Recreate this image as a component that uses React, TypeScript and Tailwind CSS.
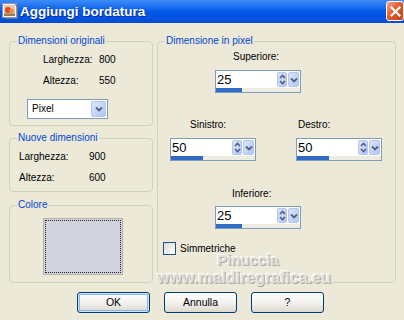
const font = "font-['Liberation_Sans',Arial,sans-serif]";

function SpinArrows() {
  return (
    <div className="w-[10px] h-[15px] rounded-[2px] border border-[#B4C6EE] bg-gradient-to-br from-[#DCE6FB] to-[#B3C6F2] flex items-center justify-center">
      <svg width="7" height="11" viewBox="0 0 7 11">
        <path d="M1 4 L3.5 1.5 L6 4" fill="none" stroke="#4D6185" strokeWidth="1.6" />
        <path d="M1 7 L3.5 9.5 L6 7" fill="none" stroke="#4D6185" strokeWidth="1.6" />
      </svg>
    </div>
  );
}

function DropButton({ w = "w-[11px]" }: { w?: string }) {
  return (
    <div className={`${w} h-[15px] rounded-[2px] border border-[#B4C6EE] bg-gradient-to-br from-[#DCE6FB] to-[#B3C6F2] flex items-center justify-center`}>
      <svg width="8" height="6" viewBox="0 0 8 6">
        <path d="M1 1.5 L4 4.5 L7 1.5" fill="none" stroke="#4D6185" strokeWidth="1.8" />
      </svg>
    </div>
  );
}

function Spin({ value, bar }: { value: string; bar: string }) {
  return (
    <div className="w-[86px] h-[23px] border border-[#7F9DB9] bg-white flex flex-col">
      <div className="h-[17px] flex items-center">
        <span className="flex-1 pl-[1px] text-[13px] leading-[17px]">{value}</span>
        <SpinArrows />
        <div className="w-[1px]" />
        <DropButton />
        <div className="w-[1px]" />
      </div>
      <div className="h-[4px] bg-[#EEEBE0]">
        <div className={`h-[4px] bg-[#316AC5] ${bar}`} />
      </div>
    </div>
  );
}

function Group({ title, className, children }: { title: string; className: string; children?: React.ReactNode }) {
  return (
    <div className={`relative border border-[#D0D0BF] rounded-[4px] ${className}`}>
      <span className="absolute -top-[8px] left-[7px] px-[1px] bg-[#ECE9D8] text-[#0046D5] leading-[13px] whitespace-nowrap">
        {title}
      </span>
      {children}
    </div>
  );
}

function Btn({ label, def }: { label: string; def?: boolean }) {
  return (
    <button
      className={`w-[73px] h-[21px] rounded-[3px] border border-[#003C74] bg-gradient-to-b from-white via-[#F3F2EE] to-[#DCD8CC] text-[10.5px] leading-[19px] text-black ${
        def ? "shadow-[inset_0_0_0_1px_#CEE7FF,inset_0_0_0_2px_#8CB0EA]" : ""
      }`}
    >
      {label}
    </button>
  );
}

export default function App() {
  return (
    <div className={`w-[404px] h-[320px] bg-[#ECE9D8] overflow-hidden text-[10px] text-black ${font}`}>
      {/* title bar */}
      <div className="h-[23px] flex items-start bg-gradient-to-b from-[#3D8CF8] via-[#0058E8] to-[#004DD6]">
        <svg className="ml-[2px] mt-[3px]" width="16" height="16" viewBox="0 0 16 16">
          <rect x="0.5" y="0.5" width="14" height="14" fill="#F4F4F4" stroke="#8F97A8" />
          <rect x="2" y="2" width="11" height="11" fill="#E8C7A8" />
          <circle cx="6" cy="7" r="3" fill="#D9482B" />
          <circle cx="9.5" cy="8" r="2.4" fill="#F08A3C" />
          <rect x="2" y="10.5" width="11" height="2.5" fill="#9A7B5A" />
          <path d="M13 1 L15.5 3.5 L15.5 15.5 L3 15.5" fill="none" stroke="#6B7386" />
        </svg>
        <span className="ml-[2px] mt-[3px] text-white font-bold text-[13.5px] leading-[17px] [text-shadow:1px_1px_0_#0A2F9C]">
          Aggiungi bordatura
        </span>
        <div className="ml-auto mt-[1px] w-[18px] h-[20px] rounded-[3px] border border-white bg-gradient-to-br from-[#F3A084] via-[#E2552A] to-[#C8411A] flex items-center justify-center">
          <svg width="11" height="11" viewBox="0 0 11 11">
            <path d="M1.5 1.5 L9.5 9.5 M9.5 1.5 L1.5 9.5" stroke="white" strokeWidth="2.2" strokeLinecap="square" />
          </svg>
        </div>
      </div>

      {/* body */}
      <div className="relative h-[297px]">
        <div className="flex pl-[9px] pt-[18px]">
          <div className="flex flex-col w-[144px]">
            <Group title="Dimensioni originali" className="h-[85px]">
              <div className="pt-[11px] pl-[33px] grid grid-cols-[56px_auto] gap-y-[8px] leading-[13px]">
                <span>Larghezza:</span>
                <span>800</span>
                <span>Altezza:</span>
                <span>550</span>
              </div>
              <div className="mt-[12px] ml-[17px] w-[81px] h-[20px] border border-[#7F9DB9] bg-white flex items-center">
                <span className="flex-1 pl-[4px] leading-[18px]">Pixel</span>
                <DropButton w="w-[15px] h-[16px]" />
                <div className="w-[1px]" />
              </div>
            </Group>
            <Group title="Nuove dimensioni" className="h-[54px] mt-[12px]">
              <div className="pt-[11px] pl-[9px] grid grid-cols-[70px_auto] gap-y-[8px] leading-[13px]">
                <span>Larghezza:</span>
                <span>900</span>
                <span>Altezza:</span>
                <span>600</span>
              </div>
            </Group>
            <Group title="Colore" className="h-[78px] mt-[13px]">
              <div className="mt-[12px] ml-[33px] w-[80px] h-[57px] border border-[#B5B3AA] bg-[#D3D3DD] p-[1px]">
                <div className="w-full h-full border border-dotted border-[#222]" />
              </div>
            </Group>
          </div>

          <Group title="Dimensione in pixel" className="ml-[4px] w-[239px] h-[242px]">
            <div className="flex flex-col">
              <span className="mt-[8px] ml-[75px] leading-[13px]">Superiore:</span>
              <div className="mt-[7px] ml-[57px]">
                <Spin value="25" bar="w-[26px]" />
              </div>
              <div className="mt-[25px] ml-[12px] flex gap-[40px]">
                <div className="flex flex-col">
                  <span className="ml-[20px] leading-[13px]">Sinistro:</span>
                  <div className="mt-[7px]">
                    <Spin value="50" bar="w-[32px]" />
                  </div>
                </div>
                <div className="flex flex-col">
                  <span className="ml-[2px] leading-[13px]">Destro:</span>
                  <div className="mt-[7px]">
                    <Spin value="50" bar="w-[32px]" />
                  </div>
                </div>
              </div>
              <span className="mt-[26px] ml-[74px] leading-[13px]">Inferiore:</span>
              <div className="mt-[6px] ml-[57px]">
                <Spin value="25" bar="w-[26px]" />
              </div>
              <label className="mt-[13px] ml-[5px] flex items-center gap-[4px]">
                <span className="w-[13px] h-[13px] border border-[#1C5180] bg-gradient-to-br from-[#DCDCD6] to-white" />
                <span className="leading-[13px]">Simmetriche</span>
              </label>
            </div>
          </Group>
        </div>

        <div className="mt-[9px] pl-[77px] flex gap-[14px]">
          <Btn label="OK" def />
          <Btn label="Annulla" />
          <Btn label="?" />
        </div>

        {/* watermark */}
        <span className="absolute left-[217px] top-[228px] text-[15px] leading-[18px] font-bold text-[#E2E0D8] [text-shadow:1px_1px_0_#A8A69E,-1px_-1px_0_#FFFFFF]">
          Pinuccia
        </span>
        <span className="absolute left-[157px] top-[245px] text-[16px] leading-[20px] font-bold text-[#E2E0D8] [text-shadow:1px_1px_0_#A8A69E,-1px_-1px_0_#FFFFFF]">
          www.maldiregrafica.eu
        </span>
      </div>
    </div>
  );
}
